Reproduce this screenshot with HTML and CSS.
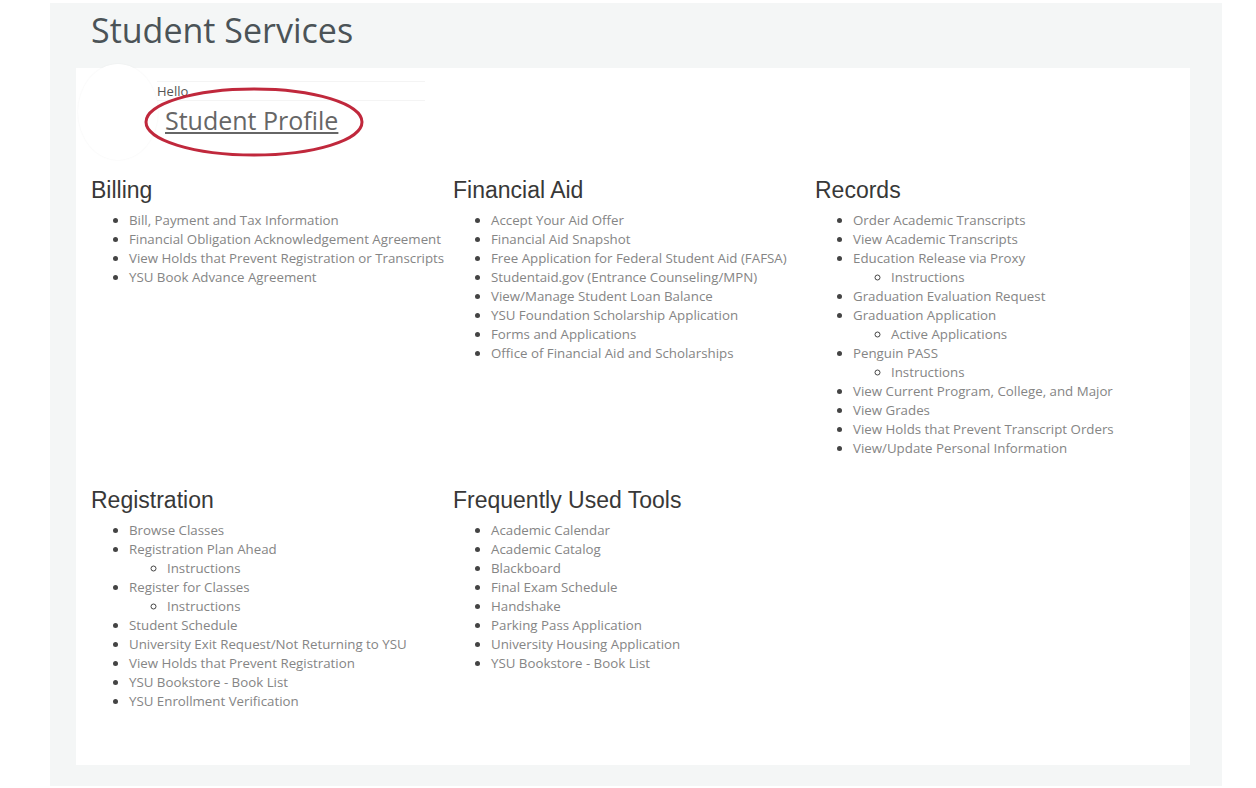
FILE: index.html
```html
<!DOCTYPE html>
<html lang="en">
<head>
<meta charset="UTF-8">
<meta name="viewport" content="width=device-width, initial-scale=1.0">
<title>Student Services</title>
<link rel="stylesheet" href="styles.css">
</head>
<body>
<div class="page">
    <h1 class="page-title">Student Services</h1>
    <div class="card">
        <div class="profile">
            <div class="avatar"></div>
            <div class="greeting">
                <div class="hello">Hello</div>
                <a class="profile-link" href="#">Student Profile</a>
                <!-- highlight ring around the profile link -->
                <svg class="ring" width="222" height="72" viewBox="0 0 222 72">
                    <ellipse cx="111" cy="36" rx="108" ry="33" fill="none" stroke="#c0283c" stroke-width="3"/>
                </svg>
            </div>
        </div>

        <div class="sections">
            <div class="section">
                <h3>Billing</h3>
                <ul>
                    <li><a href="#">Bill, Payment and Tax Information</a></li>
                    <li><a href="#">Financial Obligation Acknowledgement Agreement</a></li>
                    <li><a href="#">View Holds that Prevent Registration or Transcripts</a></li>
                    <li><a href="#">YSU Book Advance Agreement</a></li>
                </ul>
            </div>
            <div class="section">
                <h3>Financial Aid</h3>
                <ul>
                    <li><a href="#">Accept Your Aid Offer</a></li>
                    <li><a href="#">Financial Aid Snapshot</a></li>
                    <li><a href="#">Free Application for Federal Student Aid (FAFSA)</a></li>
                    <li><a href="#">Studentaid.gov (Entrance Counseling/MPN)</a></li>
                    <li><a href="#">View/Manage Student Loan Balance</a></li>
                    <li><a href="#">YSU Foundation Scholarship Application</a></li>
                    <li><a href="#">Forms and Applications</a></li>
                    <li><a href="#">Office of Financial Aid and Scholarships</a></li>
                </ul>
            </div>
            <div class="section">
                <h3>Records</h3>
                <ul>
                    <li><a href="#">Order Academic Transcripts</a></li>
                    <li><a href="#">View Academic Transcripts</a></li>
                    <li><a href="#">Education Release via Proxy</a>
                        <ul><li><a href="#">Instructions</a></li></ul>
                    </li>
                    <li><a href="#">Graduation Evaluation Request</a></li>
                    <li><a href="#">Graduation Application</a>
                        <ul><li><a href="#">Active Applications</a></li></ul>
                    </li>
                    <li><a href="#">Penguin PASS</a>
                        <ul><li><a href="#">Instructions</a></li></ul>
                    </li>
                    <li><a href="#">View Current Program, College, and Major</a></li>
                    <li><a href="#">View Grades</a></li>
                    <li><a href="#">View Holds that Prevent Transcript Orders</a></li>
                    <li><a href="#">View/Update Personal Information</a></li>
                </ul>
            </div>
            <div class="section">
                <h3>Registration</h3>
                <ul>
                    <li><a href="#">Browse Classes</a></li>
                    <li><a href="#">Registration Plan Ahead</a>
                        <ul><li><a href="#">Instructions</a></li></ul>
                    </li>
                    <li><a href="#">Register for Classes</a>
                        <ul><li><a href="#">Instructions</a></li></ul>
                    </li>
                    <li><a href="#">Student Schedule</a></li>
                    <li><a href="#">University Exit Request/Not Returning to YSU</a></li>
                    <li><a href="#">View Holds that Prevent Registration</a></li>
                    <li><a href="#">YSU Bookstore - Book List</a></li>
                    <li><a href="#">YSU Enrollment Verification</a></li>
                </ul>
            </div>
            <div class="section">
                <h3>Frequently Used Tools</h3>
                <ul>
                    <li><a href="#">Academic Calendar</a></li>
                    <li><a href="#">Academic Catalog</a></li>
                    <li><a href="#">Blackboard</a></li>
                    <li><a href="#">Final Exam Schedule</a></li>
                    <li><a href="#">Handshake</a></li>
                    <li><a href="#">Parking Pass Application</a></li>
                    <li><a href="#">University Housing Application</a></li>
                    <li><a href="#">YSU Bookstore - Book List</a></li>
                </ul>
            </div>
        </div>
    </div>
</div>
</body>
</html>
```

FILE: styles.css
```css
body {
    margin: 0;
    padding: 0;
    background-color: #fff;
    font-family: "Open Sans", sans-serif;
}
.page {
    width: 1172px;
    margin: 3px 0 0 50px;
    padding: 0 32px 21px 26px;
    box-sizing: border-box;
    background-color: #f4f6f6;
}
.page-title {
    margin: 0;
    height: 65px;
    padding-left: 15px;
    font-size: 34px;
    font-weight: 400;
    line-height: 54px;
    color: #4b5357;
}
.card {
    height: 697px;
    padding: 0 15px;
    background-color: #fff;
    box-sizing: border-box;
}
.profile {
    display: flex;
    height: 109px;
}
.avatar {
    width: 80px;
    height: 96px;
    margin: -4px 0 0 -13px;
    border-radius: 50%;
    background-color: #fff;
    box-shadow: 0 0 2px rgba(0, 0, 0, 0.05);
}
.greeting {
    position: relative;
    padding: 13px 0 0 0;
    margin-left: -1px;
}
.hello {
    width: 268px;
    font-size: 13px;
    line-height: 18px;
    color: #555;
    border-top: 1px solid #f4f4f4;
    border-bottom: 1px solid #f4f4f4;
}
.profile-link {
    display: inline-block;
    margin: 3px 0 0 8px;
    font-size: 25px;
    line-height: 32px;
    color: #666;
    text-decoration: underline;
}
.ring {
    position: absolute;
    left: -14px;
    top: 18px;
}
.sections {
    display: grid;
    grid-template-columns: 362px 362px 362px;
}
.section h3 {
    margin: 0;
    font-family: "Liberation Sans", Arial, sans-serif;
    font-size: 23px;
    font-weight: 400;
    line-height: 26px;
    color: #383838;
}
.section ul {
    margin: 8px 0 29px;
    padding-left: 38px;
    font-size: 13.3px;
    line-height: 19px;
    color: #444;
}
.section ul ul {
    margin: 0;
    list-style-type: circle;
}
.section a {
    color: #858585;
    text-decoration: none;
}
```
